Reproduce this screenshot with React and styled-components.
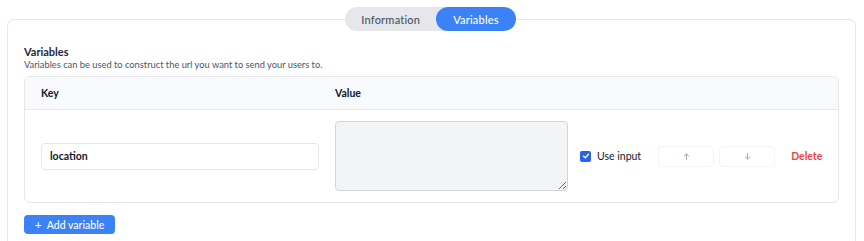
import React, { useState } from "react";
import styled, { createGlobalStyle } from "styled-components";

const Global = createGlobalStyle`
  html, body {
    margin: 0;
    background: #ffffff;
    font-family: "Lato", "Inter", sans-serif;
    color: #111827;
  }
  * { box-sizing: border-box; }
`;

const Page = styled.div`
  padding: 7px 8px 0 7px;
`;

const TabBar = styled.div`
  position: relative;
  z-index: 1;
  display: flex;
  justify-content: center;
  margin-bottom: -12px;
`;

const TabGroup = styled.div`
  display: flex;
  background: #e5e7eb;
  border-radius: 12px;
  height: 24px;
  margin-left: -2px;
`;

const Tab = styled.button`
  border: none;
  height: 24px;
  padding: 0 ${(p) => (p.$active ? "17px" : "16px")};
  border-radius: 12px;
  font-family: inherit;
  font-size: 11px;
  font-weight: 500;
  letter-spacing: 0.2px;
  color: ${(p) => (p.$active ? "#ffffff" : "#4b5563")};
  background: ${(p) => (p.$active ? "#3b82f6" : "transparent")};
  cursor: pointer;
`;

const Card = styled.div`
  border: 1px solid #e5e7eb;
  border-bottom: none;
  border-radius: 7px 7px 0 0;
  padding: 25px 16px 9px 16px;
  min-height: 230px;
`;

const Title = styled.div`
  font-size: 11px;
  font-weight: 700;
  line-height: 14px;
  color: #1f2937;
`;

const Subtitle = styled.div`
  font-size: 9.3px;
  line-height: 12px;
  color: #4b5563;
  margin-bottom: 5px;
`;

const Table = styled.div`
  border: 1px solid #e5e7eb;
  border-radius: 6px;
  overflow: hidden;
`;

const HeaderRow = styled.div`
  display: flex;
  height: 33px;
  align-items: center;
  background: #f9fafb;
  border-bottom: 1px solid #e5e7eb;
`;

const HeadCell = styled.div`
  width: ${(p) => p.$width || "auto"};
  padding-left: ${(p) => p.$pad || "0"};
  font-size: 10.5px;
  font-weight: 700;
  color: #111827;
`;

const BodyRow = styled.div`
  display: flex;
  align-items: center;
  height: 92px;
`;

const KeyCell = styled.div`
  width: 310px;
  padding: 0 16px;
`;

const KeyInput = styled.input`
  width: 278px;
  height: 27px;
  border: 1px solid #e5e7eb;
  border-radius: 4px;
  padding: 0 8px;
  font-family: inherit;
  font-size: 10.5px;
  font-weight: 700;
  color: #111827;
  outline: none;
`;

const ValueCell = styled.div`
  flex: 1;
  display: flex;
  align-items: center;
`;

const ValueArea = styled.textarea`
  width: 233px;
  height: 70px;
  background: #f3f4f6;
  border: 1px solid #d1d5db;
  border-radius: 4px;
  margin: 0 12px 0 0;
  font-family: inherit;
  outline: none;
`;

const CheckLabel = styled.label`
  display: flex;
  align-items: center;
  gap: 6px;
  font-size: 10.5px;
  color: #111827;
  margin-right: 17px;
`;

const CheckBox = styled.span`
  width: 11px;
  height: 11px;
  border-radius: 2px;
  background: #2563eb;
  display: flex;
  align-items: center;
  justify-content: center;
`;

const MoveButton = styled.button`
  width: 56px;
  height: 21px;
  border: 1px solid #f3f4f6;
  border-radius: 4px;
  background: #ffffff;
  display: flex;
  align-items: center;
  justify-content: center;
  margin-right: ${(p) => p.$gap || "5px"};
  padding: 0;
`;

const DeleteButton = styled.button`
  border: none;
  background: none;
  padding: 0;
  font-family: inherit;
  font-size: 10.5px;
  font-weight: 700;
  color: #ef4444;
`;

const AddButton = styled.button`
  margin-top: 12px;
  height: 19px;
  width: 91px;
  border: none;
  border-radius: 4px;
  background: #3b82f6;
  color: #ffffff;
  font-family: inherit;
  font-size: 10.5px;
  font-weight: 500;
  display: flex;
  align-items: center;
  justify-content: center;
  gap: 5px;
  padding: 0;
`;

const Arrow = ({ up }) => (
  <svg width="7" height="7" viewBox="0 0 10 10" fill="none" stroke="#9ca3af" strokeWidth="1.4" strokeLinecap="round" strokeLinejoin="round">
    {up ? (
      <>
        <path d="M5 9V1.5" />
        <path d="M1.8 4.5L5 1.3L8.2 4.5" />
      </>
    ) : (
      <>
        <path d="M5 1v7.5" />
        <path d="M1.8 5.5L5 8.7L8.2 5.5" />
      </>
    )}
  </svg>
);

export default function App() {
  const [tab, setTab] = useState("Variables");
  const [key, setKey] = useState("location");

  return (
    <Page>
      <Global />
      <TabBar>
        <TabGroup>
          {["Information", "Variables"].map((t) => (
            <Tab key={t} $active={tab === t} onClick={() => setTab(t)}>
              {t}
            </Tab>
          ))}
        </TabGroup>
      </TabBar>
      <Card>
        <Title>Variables</Title>
        <Subtitle>Variables can be used to construct the url you want to send your users to.</Subtitle>
        <Table>
          <HeaderRow>
            <HeadCell $width="310px" $pad="16px">Key</HeadCell>
            <HeadCell>Value</HeadCell>
          </HeaderRow>
          <BodyRow>
            <KeyCell>
              <KeyInput value={key} onChange={(e) => setKey(e.target.value)} />
            </KeyCell>
            <ValueCell>
              <ValueArea />
              <CheckLabel>
                <CheckBox>
                  <svg width="8" height="8" viewBox="0 0 10 10" fill="none" stroke="#fff" strokeWidth="1.8" strokeLinecap="round" strokeLinejoin="round">
                    <path d="M2 5.3L4.2 7.3L8 2.8" />
                  </svg>
                </CheckBox>
                Use input
              </CheckLabel>
              <MoveButton>
                <Arrow up />
              </MoveButton>
              <MoveButton $gap="16px">
                <Arrow />
              </MoveButton>
              <DeleteButton>Delete</DeleteButton>
            </ValueCell>
          </BodyRow>
        </Table>
        <AddButton>
          <span style={{ fontSize: 12, lineHeight: 1 }}>+</span>
          Add variable
        </AddButton>
      </Card>
    </Page>
  );
}
